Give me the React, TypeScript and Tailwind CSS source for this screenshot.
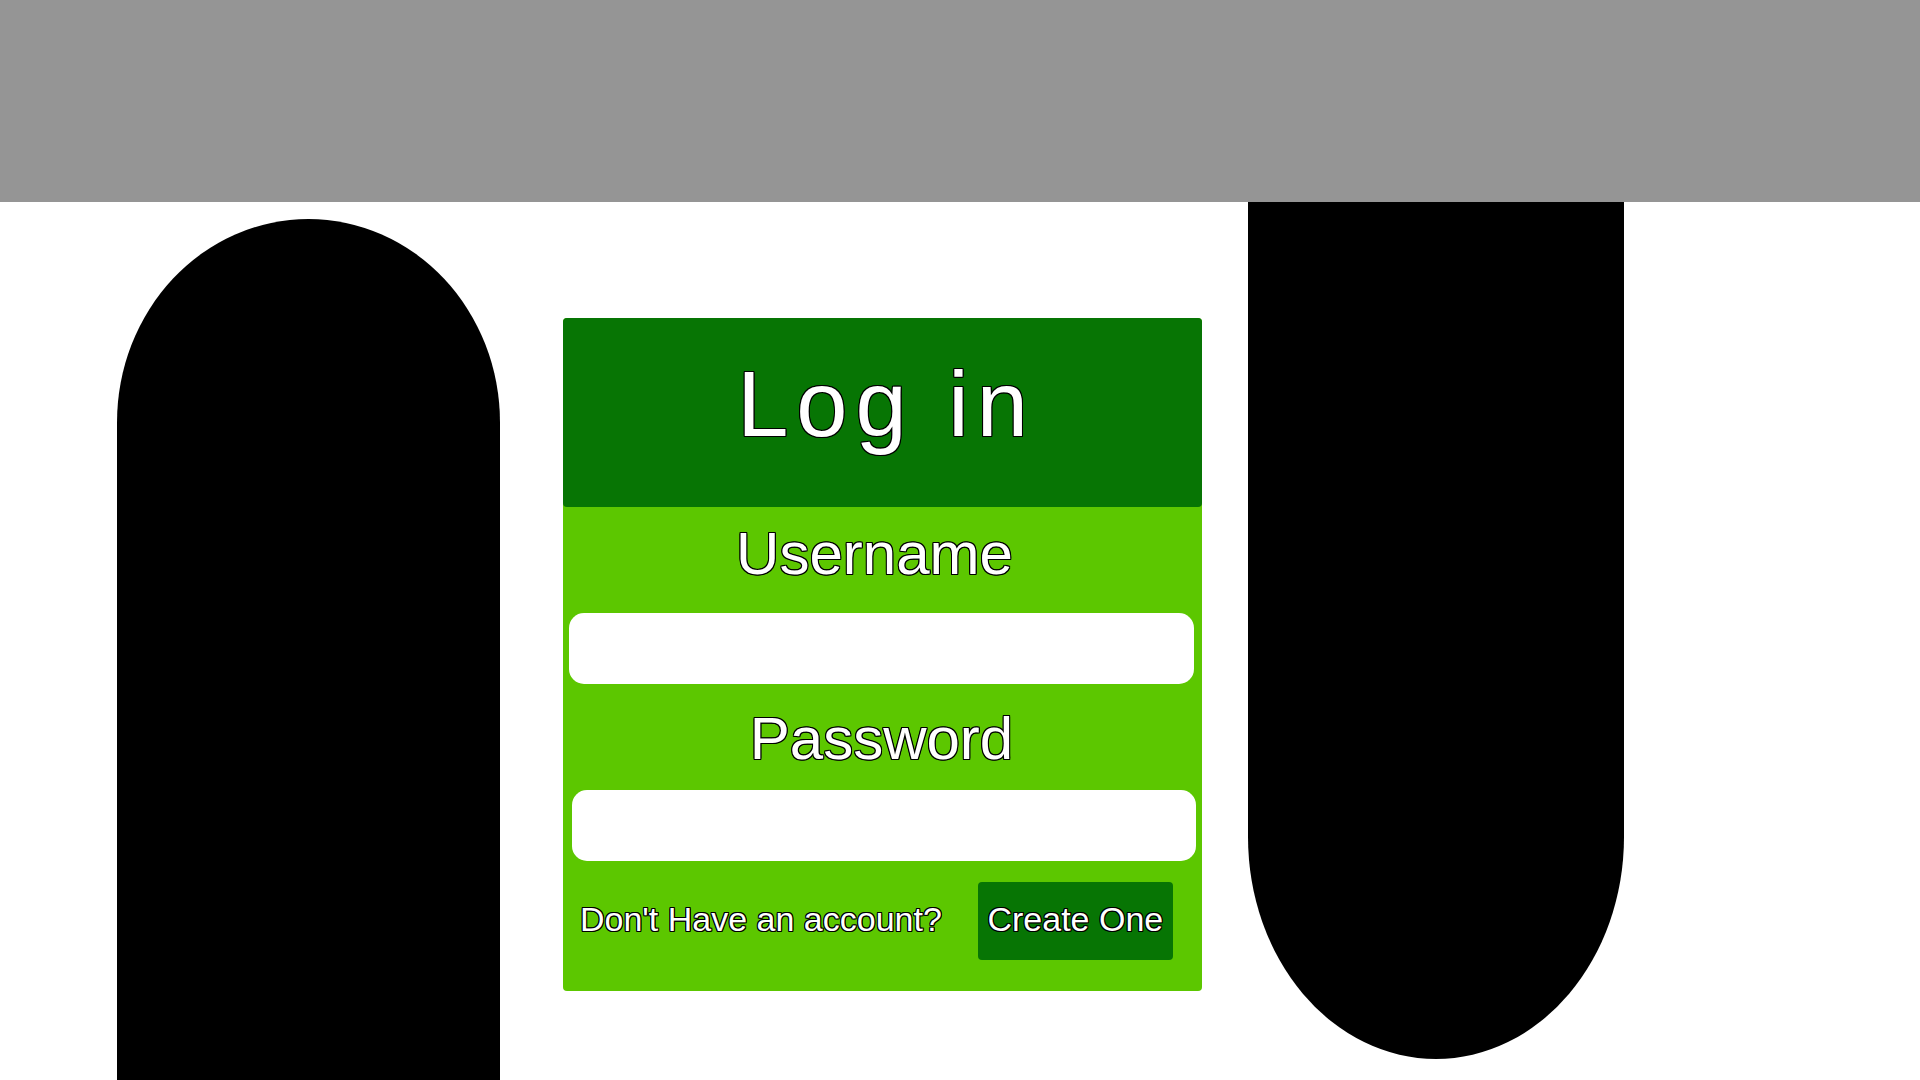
import React from "react";

const outline =
  "[text-shadow:1px_1px_0_#000,-1px_-1px_0_#000,1px_-1px_0_#000,-1px_1px_0_#000,0_1px_0_#000,0_-1px_0_#000,1px_0_0_#000,-1px_0_0_#000]";

export default function App() {
  return (
    <div className="h-screen w-full overflow-hidden bg-white font-['Liberation_Sans',Arial,sans-serif]">
      <div className="h-[202px] w-full bg-[#959595]" />
      <div className="flex items-start">
        <div className="ml-[117px] mt-[17px] h-[900px] w-[383px] shrink-0 rounded-tl-[192px_204px] rounded-tr-[192px_204px] bg-black" />
        <div className="ml-[63px] mt-[116px] flex w-[639px] shrink-0 flex-col rounded-[4px] bg-[#5cc700] pb-[31px]">
          <div className="h-[189px] rounded-[4px] bg-[#077504] pt-[40px] text-center">
            <h1
              className={`pl-[8px] text-[92px] leading-[92px] tracking-[8px] text-white ${outline}`}
            >
              Log in
            </h1>
          </div>
          <label
            className={`mt-[17px] pr-[16px] text-center text-[60px] leading-[60px] text-white ${outline}`}
          >
            Username
          </label>
          <input
            type="text"
            className="ml-[6px] mr-[8px] mt-[29px] h-[71px] rounded-[15px] bg-white px-4 text-2xl outline-none"
          />
          <label
            className={`mt-[25px] pr-[2px] text-center text-[60px] leading-[60px] text-white ${outline}`}
          >
            Password
          </label>
          <input
            type="password"
            className="ml-[9px] mr-[6px] mt-[21px] h-[71px] rounded-[15px] bg-white px-4 text-2xl outline-none"
          />
          <div className="mt-[21px] flex items-center pl-[17px]">
            <span className={`mb-[4px] text-[34px] leading-[40px] text-white ${outline}`}>
              Don't Have an account?
            </span>
            <button
              className={`ml-[36px] flex h-[78px] w-[195px] items-center justify-center rounded-[4px] bg-[#077504] pb-[4px] text-[34px] leading-[40px] text-white ${outline}`}
            >
              Create One
            </button>
          </div>
        </div>
        <div className="ml-[46px] h-[857px] w-[376px] shrink-0 rounded-bl-[188px_222px] rounded-br-[188px_222px] bg-black" />
      </div>
    </div>
  );
}
